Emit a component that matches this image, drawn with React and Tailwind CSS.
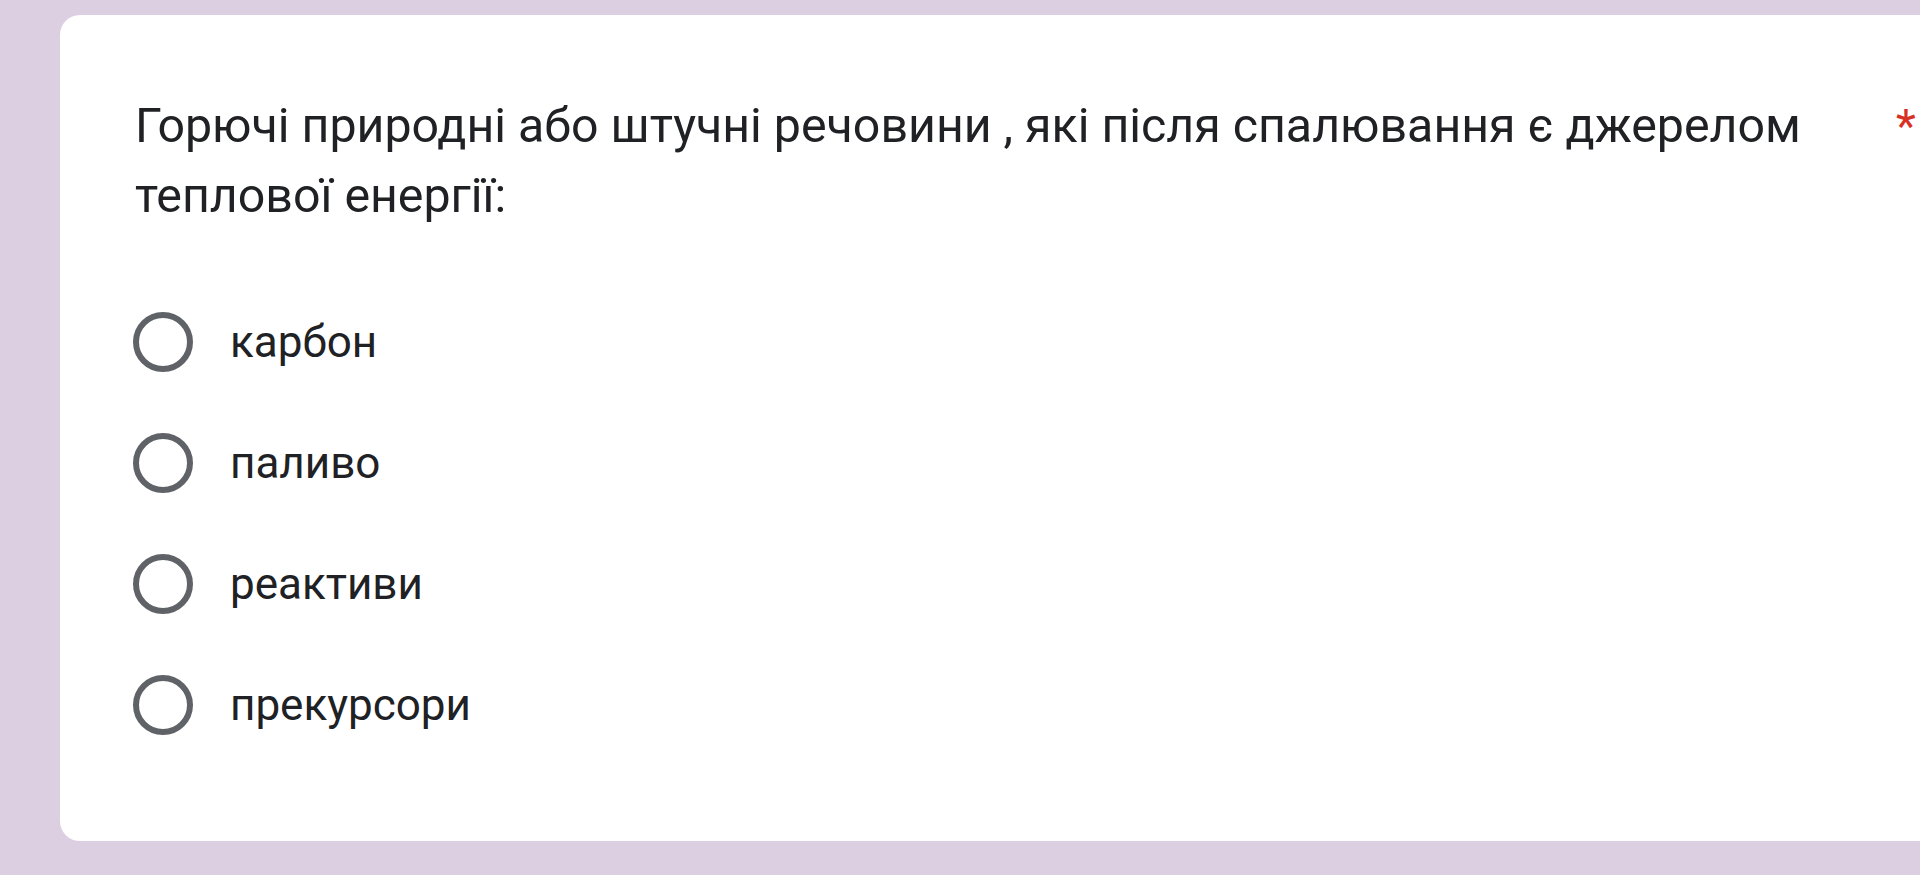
const options = ['карбон', 'паливо', 'реактиви', 'прекурсори']

function Radio() {
  return (
    <div className="w-[60px] h-[60px] rounded-full border-[6px] border-[#5f6368] shrink-0" />
  )
}

export default function App() {
  return (
    <div className="w-full h-[875px] overflow-hidden bg-[#ddcfe2] pt-[15px] pl-[60px] font-['Roboto',sans-serif] text-[#202124]">
      <div className="w-[1900px] bg-white rounded-[20px] pt-[76px] pl-[75px] pb-[76px]">
        <div className="flex items-start">
          <h2 className="w-[1740px] text-[48.3px] leading-[70px] font-normal">
            Горючі природні або штучні речовини , які після спалювання є джерелом теплової енергії:
          </h2>
          <span className="ml-[21px] text-[46px] leading-[70px] text-[#d93025]">*</span>
        </div>
        <div className="mt-[50px] flex flex-col">
          {options.map((opt) => (
            <label key={opt} className="h-[121px] flex items-center -ml-[2px]">
              <Radio />
              <span className="ml-[37px] text-[44px] leading-[70px]">{opt}</span>
            </label>
          ))}
        </div>
      </div>
    </div>
  )
}
